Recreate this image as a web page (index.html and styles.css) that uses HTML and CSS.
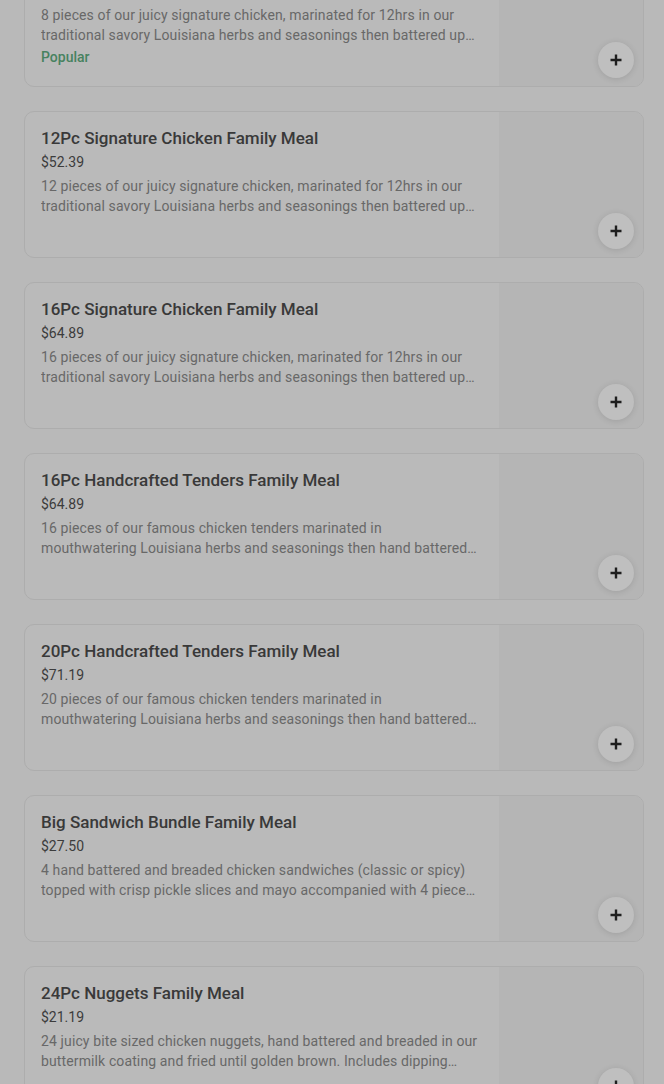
FILE: index.html
```html
<!DOCTYPE html>
<html lang="en">
<head>
<meta charset="utf-8">
<link rel="stylesheet" href="styles.css">
</head>
<body>
<div class="list">
  <div class="card">
    <div class="info">
      <div class="title">8Pc Signature Chicken Family Meal</div>
      <div class="price">$38.39</div>
      <div class="desc">8 pieces of our juicy signature chicken, marinated for 12hrs in our traditional savory Louisiana herbs and seasonings then battered up and fried to a crunchy golden perfection.</div>
      <div class="tag">Popular</div>
    </div>
    <div class="media"><button class="add"><svg width="14" height="14" viewBox="0 0 14 14"><path d="M7 1.5v11M1.5 7h11" stroke="#1e1e1e" stroke-width="2.4"/></svg></button></div>
  </div>
  <div class="card">
    <div class="info">
      <div class="title">12Pc Signature Chicken Family Meal</div>
      <div class="price">$52.39</div>
      <div class="desc">12 pieces of our juicy signature chicken, marinated for 12hrs in our traditional savory Louisiana herbs and seasonings then battered up and fried to a crunchy golden perfection.</div>
    </div>
    <div class="media"><button class="add"><svg width="14" height="14" viewBox="0 0 14 14"><path d="M7 1.5v11M1.5 7h11" stroke="#1e1e1e" stroke-width="2.4"/></svg></button></div>
  </div>
  <div class="card">
    <div class="info">
      <div class="title">16Pc Signature Chicken Family Meal</div>
      <div class="price">$64.89</div>
      <div class="desc">16 pieces of our juicy signature chicken, marinated for 12hrs in our traditional savory Louisiana herbs and seasonings then battered up and fried to a crunchy golden perfection.</div>
    </div>
    <div class="media"><button class="add"><svg width="14" height="14" viewBox="0 0 14 14"><path d="M7 1.5v11M1.5 7h11" stroke="#1e1e1e" stroke-width="2.4"/></svg></button></div>
  </div>
  <div class="card">
    <div class="info">
      <div class="title">16Pc Handcrafted Tenders Family Meal</div>
      <div class="price">$64.89</div>
      <div class="desc">16 pieces of our famous chicken tenders marinated in mouthwatering Louisiana herbs and seasonings then hand battered and breaded and fried to golden perfection.</div>
    </div>
    <div class="media"><button class="add"><svg width="14" height="14" viewBox="0 0 14 14"><path d="M7 1.5v11M1.5 7h11" stroke="#1e1e1e" stroke-width="2.4"/></svg></button></div>
  </div>
  <div class="card">
    <div class="info">
      <div class="title">20Pc Handcrafted Tenders Family Meal</div>
      <div class="price">$71.19</div>
      <div class="desc">20 pieces of our famous chicken tenders marinated in mouthwatering Louisiana herbs and seasonings then hand battered and breaded and fried to golden perfection.</div>
    </div>
    <div class="media"><button class="add"><svg width="14" height="14" viewBox="0 0 14 14"><path d="M7 1.5v11M1.5 7h11" stroke="#1e1e1e" stroke-width="2.4"/></svg></button></div>
  </div>
  <div class="card">
    <div class="info">
      <div class="title">Big Sandwich Bundle Family Meal</div>
      <div class="price">$27.50</div>
      <div class="desc">4 hand battered and breaded chicken sandwiches (classic or spicy) topped with crisp pickle slices and mayo accompanied with 4 pieces of chicken and sides.</div>
    </div>
    <div class="media"><button class="add"><svg width="14" height="14" viewBox="0 0 14 14"><path d="M7 1.5v11M1.5 7h11" stroke="#1e1e1e" stroke-width="2.4"/></svg></button></div>
  </div>
  <div class="card">
    <div class="info">
      <div class="title">24Pc Nuggets Family Meal</div>
      <div class="price">$21.19</div>
      <div class="desc">24 juicy bite sized chicken nuggets, hand battered and breaded in our buttermilk coating and fried until golden brown. Includes dipping sauces of your choice.</div>
    </div>
    <div class="media"><button class="add"><svg width="14" height="14" viewBox="0 0 14 14"><path d="M7 1.5v11M1.5 7h11" stroke="#1e1e1e" stroke-width="2.4"/></svg></button></div>
  </div>
</div>
</body>
</html>
```

FILE: styles.css
```css
html, body {
  margin: 0;
  padding: 0;
  background: #b9b9b9;
  overflow: hidden;
}
body {
  font-family: Roboto, "Liberation Sans", sans-serif;
}
.list {
  display: flex;
  flex-direction: column;
  gap: 24px;
  padding: 0 20px 0 24px;
  margin-top: -60px;
}
.card {
  display: flex;
  border: 1px solid #adadad;
  border-radius: 10px;
  background: #bababa;
  overflow: hidden;
  min-height: 145px;
}
.info {
  flex: 1;
  padding: 16px 18px 16px 16px;
  display: flex;
  flex-direction: column;
  gap: 4px;
  min-width: 0;
}
.title {
  font-size: 17px;
  line-height: 20px;
  font-weight: 500;
  color: #393939;
}
.price {
  font-size: 14px;
  line-height: 20px;
  color: #3c3c3c;
}
.desc {
  font-size: 14px;
  line-height: 20px;
  letter-spacing: 0.12px;
  color: #686868;
  display: -webkit-box;
  -webkit-line-clamp: 2;
  -webkit-box-orient: vertical;
  overflow: hidden;
}
.tag {
  font-size: 14px;
  line-height: 16px;
  font-weight: 500;
  color: #47825f;
}
.media {
  position: relative;
  width: 144px;
  flex: none;
  background: #b5b5b5;
}
.add {
  position: absolute;
  right: 9px;
  bottom: 8px;
  width: 36px;
  height: 36px;
  border-radius: 50%;
  border: none;
  background: #bfbfbf;
  box-shadow: 0 1px 6px rgba(0,0,0,0.12);
  display: flex;
  align-items: center;
  justify-content: center;
  padding: 0;
}
```
